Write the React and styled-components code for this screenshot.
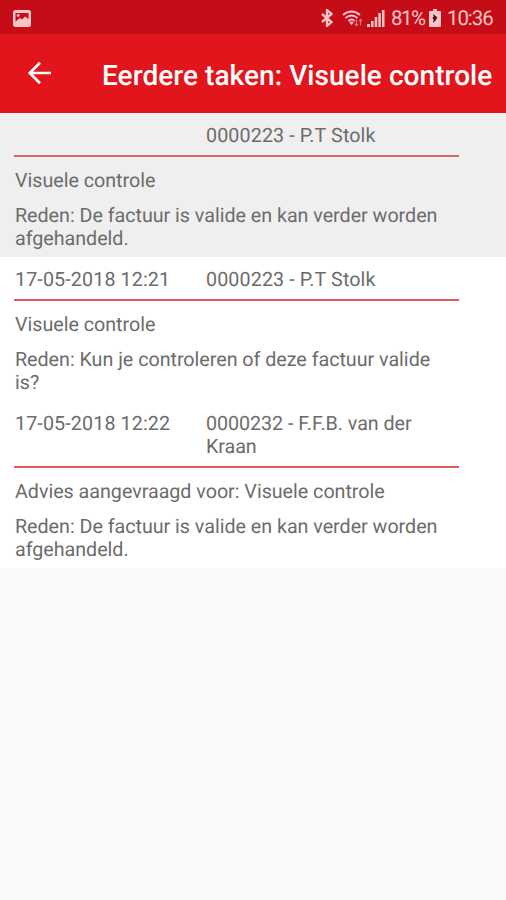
import React from 'react';
import styled, { createGlobalStyle } from 'styled-components';

const GlobalStyle = createGlobalStyle`
  * {
    box-sizing: border-box;
  }

  body {
    margin: 0;
    background-color: #fafafa;
    font-family: Roboto, sans-serif;
    text-rendering: geometricPrecision;
  }

  p {
    margin: 0;
  }
`;

const Screen = styled.div`
  width: 100%;
  min-height: 100vh;
  background-color: #fafafa;
`;

const StatusBar = styled.div`
  display: flex;
  align-items: center;
  justify-content: space-between;
  height: 34px;
  padding: 2px 13px 0;
  background-color: #c60d17;
  color: #f6c5c8;

  & svg {
    display: block;
    flex: none;
  }
`;

const StatusIcons = styled.div`
  display: flex;
  align-items: center;
`;

const StatusText = styled.span`
  width: ${({ $width }) => $width}px;
  margin-top: 2px;
  margin-left: ${({ $gap }) => $gap}px;
  font-size: 20.5px;
  line-height: 24px;
  letter-spacing: ${({ $spacing }) => $spacing}px;
  white-space: nowrap;
`;

const IconSlot = styled.span`
  margin-left: ${({ $gap }) => $gap}px;
`;

const AppBar = styled.header`
  display: flex;
  align-items: center;
  height: 79px;
  padding: 0 0 0 27px;
  background-color: #e2151c;
  color: #fff;
`;

const BackButton = styled.button`
  display: flex;
  width: 75px;
  padding: 0;
  margin-top: -1px;
  border: 0;
  background: none;
  color: inherit;
`;

const Title = styled.h1`
  margin: 4px 0 0;
  font-size: 28px;
  font-weight: 500;
  line-height: 32px;
  letter-spacing: 0.06px;
  white-space: nowrap;
`;

const TaskItem = styled.article`
  padding: 10px 47px 7px 14px;
  background-color: ${({ $highlighted }) => ($highlighted ? '#efefef' : '#fff')};
  color: #6c6c6c;
  font-size: 19.7px;
  line-height: 23px;
`;

const TaskHeader = styled.div`
  display: grid;
  grid-template-columns: 191px 1fr;
  padding: 1px 0 8px 1px;
  border-bottom: 2px solid ${({ $highlighted }) => ($highlighted ? '#d4666b' : '#e25a55')};
`;

const HeaderCell = styled.span`
  letter-spacing: ${({ $tight }) => ($tight ? -0.05 : 0.12)}px;
`;

const TaskText = styled.p`
  margin-top: 12px;
  padding-left: 1px;
  letter-spacing: -0.02px;
`;

const PictureIcon = () => (
  <svg width="18" height="17" viewBox="0 0 18 17">
    <rect width="18" height="17" rx="2.5" fill="currentColor" />
    <path d="M2.500 3h13v6l-3.500-2.500-3 3L7 8l-4.500 3.500z" fill="#c60d17" />
    <circle cx="5.200" cy="5.500" r="1.400" fill="currentColor" />
  </svg>
);

const BluetoothIcon = () => (
  <svg width="12" height="18" viewBox="0 0 12 18" fill="none" stroke="currentColor" strokeWidth="2.300">
    <path d="M1 5l9.500 8L6 17V1l4.500 4L1 13" />
  </svg>
);

const WifiIcon = () => (
  <svg width="22" height="18" viewBox="0 0 22 18" fill="none" stroke="currentColor" strokeWidth="1.800">
    <path d="M1 6q8.500-7 17 0M3.500 9q6-5 12 0M6.300 12q3.200-3 6.400 0" />
    <path d="M9.500 16l-2.400-2.700q2.400-1.600 4.800 0z" fill="currentColor" stroke="none" />
    <path d="M14.500 10.500v6M13 15l1.500 1.700L16 15M18.500 16.500v-6M17 12l1.500-1.700L20 12" strokeWidth="1.200" opacity="0.550" />
  </svg>
);

const SignalIcon = () => (
  <svg width="18" height="18" viewBox="0 0 18 18" fill="currentColor">
    <path d="M0 15h3v3H0zM4 12h2.500v6H4zM7.700 8h2.500v10H7.700zM11.300 4h2.500v14h-2.500zM15 1h2.500v17H15z" />
  </svg>
);

const BatteryIcon = () => (
  <svg width="12" height="18" viewBox="0 0 12 18">
    <path d="M4 0h4v2h3q1 0 1 1v14q0 1-1 1H1q-1 0-1-1V3q0-1 1-1h3z" fill="currentColor" />
    <path d="M4 5l4.500 3.500-1.500 1.500.500.500L4 14l.7-3.500L3.200 9l1.500-1z" fill="#3c1114" />
  </svg>
);

const BackIcon = () => (
  <svg width="26" height="24" viewBox="0 0 26 24" fill="none" stroke="currentColor" strokeWidth="2.700">
    <path d="M24 12H3M13 1.800L2.800 12 13 22.200" />
  </svg>
);

const tasks = [
  {
    id: 1,
    date: '',
    user: '0000223 - P.T Stolk',
    title: 'Visuele controle',
    reason: 'De factuur is valide en kan verder worden afgehandeld.',
    highlighted: true,
  },
  {
    id: 2,
    date: '17-05-2018 12:21',
    user: '0000223 - P.T Stolk',
    title: 'Visuele controle',
    reason: 'Kun je controleren of deze factuur valide is?',
  },
  {
    id: 3,
    date: '17-05-2018 12:22',
    user: '0000232 - F.F.B. van der Kraan',
    title: 'Advies aangevraagd voor: Visuele controle',
    reason: 'De factuur is valide en kan verder worden afgehandeld.',
  },
];

const Task = ({ date, user, title, reason, highlighted }) => (
  <TaskItem $highlighted={highlighted}>
    <TaskHeader $highlighted={highlighted}>
      <HeaderCell>{date}</HeaderCell>
      <HeaderCell $tight={user.length > 20}>{user}</HeaderCell>
    </TaskHeader>
    <TaskText>{title}</TaskText>
    <TaskText>{`Reden: ${reason}`}</TaskText>
  </TaskItem>
);

const App = () => (
  <>
    <GlobalStyle />
    <Screen>
      <StatusBar>
        <PictureIcon />
        <StatusIcons>
          <BluetoothIcon />
          <IconSlot $gap={9}>
            <WifiIcon />
          </IconSlot>
          <IconSlot $gap={3}>
            <SignalIcon />
          </IconSlot>
          <StatusText $gap={6} $width={34} $spacing={-1.5}>81%</StatusText>
          <IconSlot $gap={4}>
            <BatteryIcon />
          </IconSlot>
          <StatusText $gap={6} $width={46} $spacing={-1.1}>10:36</StatusText>
        </StatusIcons>
      </StatusBar>
      <AppBar>
        <BackButton aria-label="Terug">
          <BackIcon />
        </BackButton>
        <Title>Eerdere taken: Visuele controle</Title>
      </AppBar>
      <main>
        {tasks.map((task) => (
          <Task key={task.id} {...task} />
        ))}
      </main>
    </Screen>
  </>
);

export default App;
